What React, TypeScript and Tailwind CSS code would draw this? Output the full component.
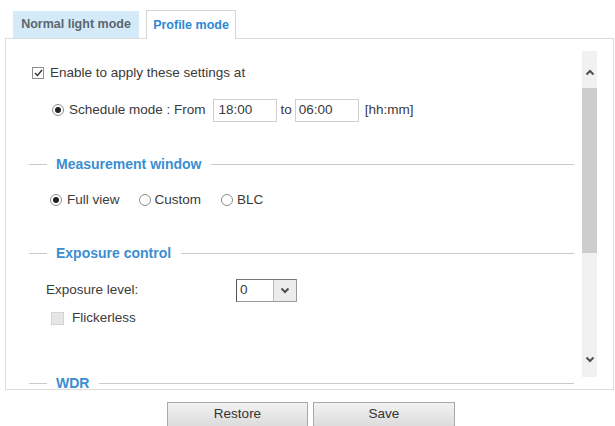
import React from "react";

function Heading({ title }: { title: string }) {
  return (
    <div className="flex h-[18px] items-center pl-[23px] pr-[8px]">
      <div className="h-px w-[18px] bg-[#c9c9c9]" />
      <span className="ml-[9px] mr-[10px] whitespace-nowrap text-[14px] font-bold text-[#3b8ed0]">
        {title}
      </span>
      <div className="h-px flex-1 bg-[#c9c9c9]" />
    </div>
  );
}

function Radio({ checked }: { checked?: boolean }) {
  return (
    <span className="flex h-[12px] w-[12px] shrink-0 items-center justify-center rounded-full border border-[#8e8e8e] bg-white">
      {checked && <span className="h-[6px] w-[6px] rounded-full bg-[#222]" />}
    </span>
  );
}

function Chevron({ up }: { up?: boolean }) {
  return (
    <svg width="10" height="7" viewBox="0 0 10 7" className={up ? "rotate-180" : ""}>
      <path d="M1.5 1.5 L5 5 L8.5 1.5" fill="none" stroke="#505050" strokeWidth="2" />
    </svg>
  );
}

export default function App() {
  return (
    <div className="h-[426px] w-[615px] overflow-hidden bg-white pt-[10px] font-['Liberation_Sans',Arial,sans-serif] text-[13.5px] text-[#3a3a3a]">
      {/* Tabs */}
      <div className="flex h-[28px] items-start pl-[13px]">
        <div className="mt-[1px] flex h-[27px] w-[126px] items-center justify-center bg-[#d5eaf8] text-[12.5px] font-bold text-[#5b6770]">
          Normal light mode
        </div>
        <div className="relative z-10 ml-[7px] flex h-[29px] w-[90px] items-center justify-center border border-b-0 border-[#d4d4d4] bg-white text-[12.5px] font-bold text-[#2b8ad3]">
          Profile mode
        </div>
      </div>

      {/* Panel */}
      <div className="ml-[5px] flex h-[352px] w-[609px] border border-[#dcdcdc]">
        <div className="w-[576px] shrink-0 overflow-hidden">
          <div className="mt-[27px] flex h-[14px] items-center pl-[26px]">
            <span className="flex h-[12px] w-[12px] shrink-0 items-center justify-center border border-[#8e8e8e] bg-white">
              <svg width="9" height="8" viewBox="0 0 9 8">
                <path d="M1 4 L3.5 6.5 L8 1" fill="none" stroke="#333" strokeWidth="1.4" />
              </svg>
            </span>
            <span className="ml-[6px]">Enable to apply these settings at</span>
          </div>

          <div className="mt-[18px] flex h-[24px] items-center pl-[46px]">
            <Radio checked />
            <span className="ml-[5px]">Schedule mode : From</span>
            <div className="ml-[7px] flex h-[23px] w-[64px] items-center border border-[#cfcfcf] pl-[5px]">18:00</div>
            <span className="ml-[4px]">to</span>
            <div className="ml-[3px] flex h-[23px] w-[64px] items-center border border-[#cfcfcf] pl-[3px]">06:00</div>
            <span className="ml-[6px]">[hh:mm]</span>
          </div>

          <div className="mt-[33px]">
            <Heading title="Measurement window" />
          </div>

          <div className="mt-[19px] flex h-[16px] items-center pl-[44px]">
            <Radio checked />
            <span className="ml-[5px]">Full view</span>
            <span className="ml-[19px]"><Radio /></span>
            <span className="ml-[4px]">Custom</span>
            <span className="ml-[20px]"><Radio /></span>
            <span className="ml-[4px]">BLC</span>
          </div>

          <div className="mt-[36px]">
            <Heading title="Exposure control" />
          </div>

          <div className="mt-[17px] flex h-[23px] items-center pl-[40px]">
            <span className="w-[190px]">Exposure level:</span>
            <div className="flex h-[23px] w-[61px] border border-[#9a9a9a] border-l-[#555] border-t-[#777] bg-white">
              <span className="flex flex-1 items-center pl-[3px]">0</span>
              <span className="flex w-[23px] items-center justify-center border-l border-[#bbb] bg-[#ececec]">
                <Chevron />
              </span>
            </div>
          </div>

          <div className="mt-[9px] flex h-[14px] items-center pl-[45px]">
            <span className="h-[13px] w-[13px] shrink-0 border border-[#d4d4d4] bg-[#e6e6e6]" />
            <span className="ml-[8px]">Flickerless</span>
          </div>

          <div className="mt-[49px]">
            <Heading title="WDR" />
          </div>
        </div>

        {/* Scrollbar */}
        <div className="my-[12px] flex w-[15px] shrink-0 flex-col bg-[#f1f1f1]">
          <div className="flex h-[37px] items-center justify-center pt-[6px]">
            <Chevron up />
          </div>
          <div className="h-[165px] bg-[#cdcdcd]" />
          <div className="flex flex-1 items-end justify-center pb-[14px]">
            <Chevron />
          </div>
        </div>
      </div>

      {/* Buttons */}
      <div className="mt-[12px] flex justify-center gap-[5px] pl-[7px]">
        <button className="h-[25px] w-[141px] border border-[#a9a9a9] bg-gradient-to-b from-[#f2f2f2] to-[#dcdcdc] text-[13.5px] text-[#333]">
          Restore
        </button>
        <button className="h-[25px] w-[142px] border border-[#a9a9a9] bg-gradient-to-b from-[#f2f2f2] to-[#dcdcdc] text-[13.5px] text-[#333]">
          Save
        </button>
      </div>
    </div>
  );
}
